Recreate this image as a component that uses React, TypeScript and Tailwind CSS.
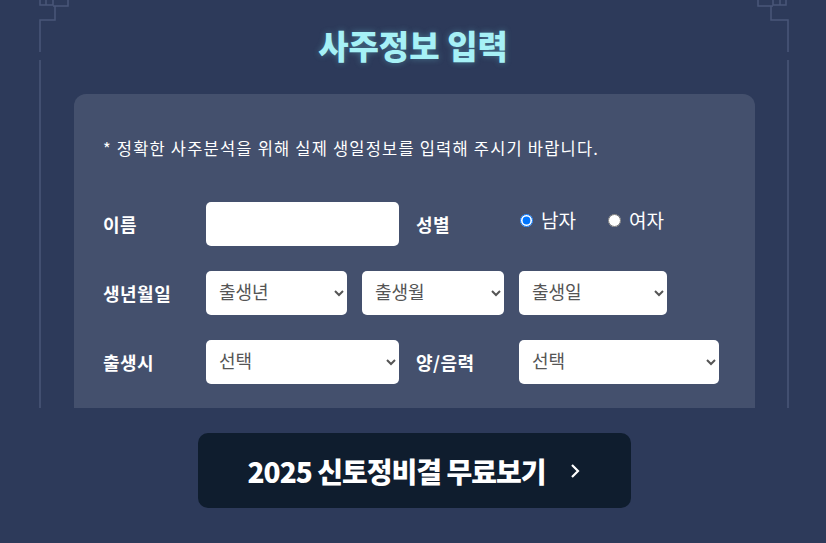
import React from "react"

const kr = "font-['Noto_Sans_CJK_KR','Noto_Sans',sans-serif]"

// Decorative frame lines at the page's edges
function FrameLines() {
  return (
    <svg
      className="pointer-events-none absolute left-0 top-0"
      width="826"
      height="408"
      viewBox="0 0 826 408"
      fill="none"
      stroke="#4a5779"
      strokeWidth="1.5"
    >
      {/* left */}
      <path d="M40 0 V5 H53 V0" />
      <path d="M46 0 V5" />
      <path d="M53 6 H68 V0" />
      <path d="M55 6 V20 H40 V52" />
      <path d="M40 60 V408" />
      {/* right */}
      <path d="M786 0 V5 H773 V0" />
      <path d="M780 0 V5" />
      <path d="M773 6 H758 V0" />
      <path d="M771 6 V20 H788 V52" />
      <path d="M788 60 V408" />
    </svg>
  )
}

function Label({ children, className = "" }: { children: React.ReactNode; className?: string }) {
  return (
    <span className={`text-[18px] font-bold tracking-[0.5px] text-white ${className}`}>{children}</span>
  )
}

function Select({ width, label }: { width: string; label: string }) {
  return (
    <select
      defaultValue=""
      className={`${width} h-[44px] rounded-[5px] bg-white pb-[4px] pl-[9px] pr-1 text-[18px] text-[#555] outline-none ${kr}`}
    >
      <option value="">{label}</option>
    </select>
  )
}

export default function App() {
  return (
    <div className={`h-[543px] w-full overflow-hidden bg-[#2d3a5a] ${kr}`}>
      <section className="relative h-[408px]">
        <FrameLines />

        <h1 className="pt-[25px] text-center text-[33px] font-black leading-[40px] tracking-[0px] text-[#a6f1f6] [text-shadow:0_0_6px_rgba(120,230,240,0.35)]">
          사주정보 입력
        </h1>

        <div className="ml-[74px] mt-[29px] h-[314px] w-[681px] rounded-t-[12px] bg-[#44506d] px-[29px] pt-[42px]">
          <p className="text-[16.5px] leading-[24px] tracking-[1.2px] text-white">
            * 정확한 사주분석을 위해 실제 생일정보를 입력해 주시기 바랍니다.
          </p>

          <div className="mt-[42px] flex flex-col gap-[25px]">
            {/* name / gender */}
            <div className="flex h-[44px] items-center">
              <Label className="w-[103px]">이름</Label>
              <input
                type="text"
                className="h-[44px] w-[193px] rounded-[5px] bg-white px-2 text-[17px] text-[#333] outline-none"
              />
              <Label className="ml-[17px] w-[104px]">성별</Label>
              <label className="-mt-[8px] flex items-center gap-[8px] text-[19px] text-white">
                <input type="radio" name="gender" defaultChecked className="m-0 h-[13px] w-[13px]" />
                남자
              </label>
              <label className="-mt-[8px] ml-[32px] flex items-center gap-[8px] text-[19px] text-white">
                <input type="radio" name="gender" className="m-0 h-[13px] w-[13px]" />
                여자
              </label>
            </div>

            {/* birth date */}
            <div className="flex h-[44px] items-center">
              <Label className="w-[103px]">생년월일</Label>
              <Select width="w-[141px]" label="출생년" />
              <div className="w-[15px]" />
              <Select width="w-[142px]" label="출생월" />
              <div className="w-[15px]" />
              <Select width="w-[148px]" label="출생일" />
            </div>

            {/* birth hour / calendar */}
            <div className="flex h-[44px] items-center">
              <Label className="w-[103px]">출생시</Label>
              <Select width="w-[193px]" label="선택" />
              <Label className="ml-[17px] w-[103px]">양/음력</Label>
              <Select width="w-[200px]" label="선택" />
            </div>
          </div>
        </div>
      </section>

      <button
        type="button"
        className="ml-[198px] mt-[25px] flex h-[75px] w-[433px] items-center justify-center gap-[24px] rounded-[10px] bg-[#0f1d2e] text-white"
      >
        <span className="text-[28px] font-black tracking-[-1px]">2025 신토정비결 무료보기</span>
        <svg width="12" height="18" viewBox="0 0 12 18" fill="none" stroke="white" strokeWidth="2.2">
          <path d="M3 3 L9 9 L3 15" />
        </svg>
      </button>
    </div>
  )
}
